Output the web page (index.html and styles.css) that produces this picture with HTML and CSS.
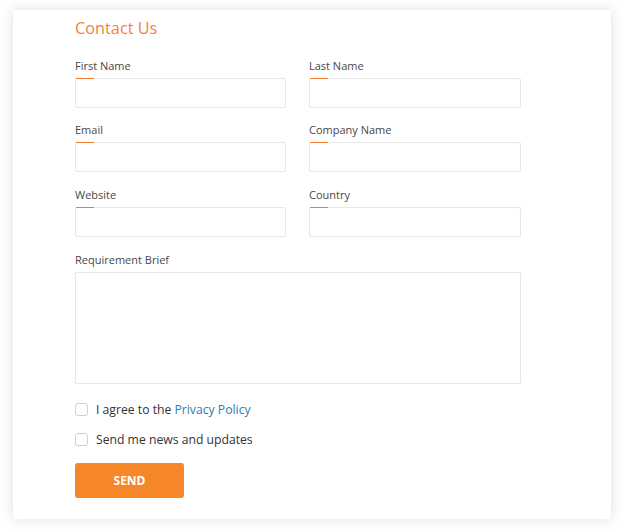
FILE: index.html
```html
<!DOCTYPE html>
<html>
<head>
<meta charset="utf-8">
<link rel="stylesheet" href="styles.css">
</head>
<body>
<div class="card">
  <h1 class="title">Contact Us</h1>
  <form class="form">
    <div class="grid">
      <div class="field">
        <label class="label">First Name</label>
        <div class="box"><input class="input" type="text"></div>
      </div>
      <div class="field">
        <label class="label">Last Name</label>
        <div class="box"><input class="input" type="text"></div>
      </div>
      <div class="field">
        <label class="label">Email</label>
        <div class="box"><input class="input" type="text"></div>
      </div>
      <div class="field">
        <label class="label">Company Name</label>
        <div class="box"><input class="input" type="text"></div>
      </div>
      <div class="field">
        <label class="label">Website</label>
        <div class="box"><input class="input" type="text"></div>
      </div>
      <div class="field">
        <label class="label">Country</label>
        <div class="box"><input class="input" type="text"></div>
      </div>
      <div class="field wide">
        <label class="label">Requirement Brief</label>
        <textarea class="textarea"></textarea>
      </div>
    </div>
    <div class="checks">
      <label class="check"><span class="cb"></span><span>I agree to the <a class="link">Privacy Policy</a></span></label>
      <label class="check"><span class="cb"></span><span>Send me news and updates</span></label>
    </div>
    <button class="send" type="button">SEND</button>
  </form>
</div>
</body>
</html>
```
FILE: styles.css
```css
html, body {
  margin: 0;
  padding: 0;
  background: #ffffff;
}
body {
  padding: 10px 13px 10px 13px;
  font-family: "Open Sans", "Liberation Sans", sans-serif;
}
.card {
  width: 598px;
  height: 509px;
  box-sizing: border-box;
  background: #fff;
  box-shadow: 0 0 12px rgba(0, 0, 0, 0.13);
  padding: 6px 90px 0 62px;
}
.title {
  margin: 0;
  font-size: 16.3px;
  line-height: 24px;
  font-weight: 400;
  color: #f5833f;
}
.form {
  margin-top: 18px;
  width: 446px;
}
.grid {
  display: grid;
  grid-template-columns: 211px 212px;
  grid-template-rows: 50px 51px 51px auto;
  column-gap: 23px;
  row-gap: 14px;
}
.wide {
  grid-column: 1 / span 2;
}
.field {
  display: flex;
  flex-direction: column;
}
.label {
  font-size: 11px;
  line-height: 15px;
  color: #474747;
  margin-bottom: 5px;
}
.box {
  position: relative;
}
.box::before {
  content: "";
  position: absolute;
  top: 0;
  left: 1px;
  width: 18px;
  height: 1px;
  background: #f07a2e;
}
.input {
  display: block;
  width: 100%;
  height: 30px;
  box-sizing: border-box;
  border: 1px solid #e6e6e6;
  border-radius: 2px;
  background: #fff;
  margin: 0;
  outline: none;
}
.textarea {
  display: block;
  width: 446px;
  height: 112px;
  box-sizing: border-box;
  border: 1px solid #e6e6e6;
  border-radius: 2px;
  resize: none;
  margin: 0;
}
.checks {
  margin-top: 15px;
  display: flex;
  flex-direction: column;
  gap: 10px;
}
.check {
  display: flex;
  align-items: center;
  gap: 8px;
  height: 20px;
  font-size: 12.2px;
  color: #333;
}
.cb {
  width: 13px;
  height: 13px;
  box-sizing: border-box;
  border: 1px solid #cfcfcf;
  border-radius: 3px;
  background: #fff;
}
.link {
  color: #2b7bb5;
}
.send {
  margin-top: 14px;
  width: 109px;
  height: 35px;
  border: none;
  border-radius: 3px;
  background: #f5862a;
  color: #fff;
  font-family: "Open Sans", "Liberation Sans", sans-serif;
  font-weight: 700;
  font-size: 12px;
  padding: 0;
}
```
